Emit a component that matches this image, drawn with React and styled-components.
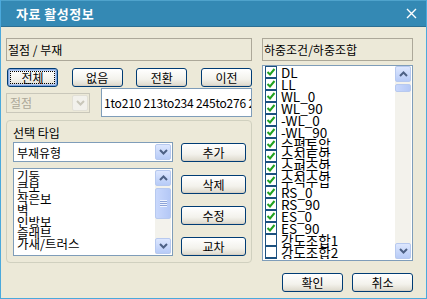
import React from 'react'
import styled, { createGlobalStyle } from 'styled-components'

const GlobalStyle = createGlobalStyle`
    html, body {
        margin: 0;
        padding: 0;
        background: #ece9d8;
    }
    body {
        font-family: "Noto Sans CJK KR", "Liberation Sans", sans-serif;
        font-size: 12px;
        color: #000;
    }
    * { box-sizing: border-box; }
`

const memberTypes = ['기둥', '큰보', '작은보', '벽', '인방보', '슬래브', '가새/트러스']

const loads = [
    ['DL', true], ['LL', true], ['WL_0', true], ['WL_90', true],
    ['-WL_0', true], ['-WL_90', true], ['수평토압', true], ['수직토압', true],
    ['수평수압', true], ['수직수압', true], ['RS_0', true], ['RS_90', true],
    ['ES_0', true], ['ES_90', true], ['강도조합1', false], ['강도조합2', false],
    ['강도조합3', false],
]

function Chevron({ up, color = '#4d6185' }) {
    return (
        <svg width="9" height="6" viewBox="0 0 9 6">
            <path d={up ? 'M1 5 L4.5 1.5 L8 5' : 'M1 1 L4.5 4.5 L8 1'} fill="none" stroke={color} strokeWidth="2" />
        </svg>
    )
}

function ScrollBar({ thumbTop, thumbHeight, grip }) {
    return (
        <Bar>
            <ArrowBtn><Chevron up /></ArrowBtn>
            <Track>
                <Thumb style={{ marginTop: thumbTop, height: thumbHeight }}>
                    {grip && <Grip />}
                </Thumb>
            </Track>
            <ArrowBtn><Chevron /></ArrowBtn>
        </Bar>
    )
}

function App() {
    return (
        <Window>
            <GlobalStyle />
            <TitleBar>
                <Title>자료 활성정보</Title>
                <svg width="11" height="11" viewBox="0 0 11 11">
                    <path d="M1 1 L10 10 M10 1 L1 10" stroke="#fff" strokeWidth="1.4" />
                </svg>
            </TitleBar>

            <Body>
                <Column>
                    <Header>절점 / 부재</Header>

                    <ButtonRow>
                        <Button $w={51} $default>
                            <Focus>전체</Focus>
                        </Button>
                        <Button $w={51}>없음</Button>
                        <Button $w={51}>전환</Button>
                        <Button $w={51}>이전</Button>
                    </ButtonRow>

                    <SelectRow>
                        <Combo $w={84} $disabled>
                            <ComboText $disabled>절점</ComboText>
                            <DropBtn $disabled><Chevron color="#c9c7ba" /></DropBtn>
                        </Combo>
                        <Input>1to210 213to234 245to276 281to300 310to340</Input>
                    </SelectRow>

                    <Group>
                        <GroupLabel>선택 타입</GroupLabel>
                        <GroupGrid>
                            <div>
                                <Combo $w={160}>
                                    <ComboText>부재유형</ComboText>
                                    <DropBtn><Chevron /></DropBtn>
                                </Combo>
                                <ListBox>
                                    <Items>
                                        {memberTypes.map(t => <Item key={t}>{t}</Item>)}
                                    </Items>
                                    <ScrollBar thumbTop={2} thumbHeight={31} grip />
                                </ListBox>
                            </div>
                            <SideButtons>
                                <Button $w={65} $mt={1}>추가</Button>
                                <Button $w={65} $mt={13}>삭제</Button>
                                <Button $w={65} $mt={12}>수정</Button>
                                <Button $w={65} $mt={12}>교차</Button>
                            </SideButtons>
                        </GroupGrid>
                    </Group>
                </Column>

                <Column>
                    <Header>하중조건/하중조합</Header>
                    <CheckList>
                        <Items $pl={2}>
                            {loads.map(([name, on]) => (
                                <CheckRow key={name}>
                                    <Box>
                                        {on && (
                                            <svg width="10" height="10" viewBox="0 0 10 10">
                                                <path d="M1.5 5 L4 7.5 L8.5 2" fill="none" stroke="#21a121" strokeWidth="2" />
                                            </svg>
                                        )}
                                    </Box>
                                    <CheckText>{name}</CheckText>
                                </CheckRow>
                            ))}
                        </Items>
                        <ScrollBar thumbTop={2} thumbHeight={8} />
                    </CheckList>
                    <Footer>
                        <Button $w={61}>확인</Button>
                        <Button $w={61}>취소</Button>
                    </Footer>
                </Column>
            </Body>
        </Window>
    )
}
export default App;

const Window = styled.div`
    width: 427px;
    height: 299px;
    background: #ece9d8;
    border: 1px solid #4ba9dc;
    border-top: none;
    display: flex;
    flex-direction: column;
    overflow: hidden;
`
const TitleBar = styled.div`
    height: 27px;
    flex-shrink: 0;
    margin: 0 -1px;
    background: #3489b4;
    border-top: 1px solid #4fa3cc;
    border-bottom: 1px solid #2c6f93;
    display: flex;
    align-items: center;
    justify-content: space-between;
    padding: 0 10px 0 16px;
`
const Title = styled.span`
    color: #fff;
    font-weight: bold;
    font-size: 13px;
    letter-spacing: 0.5px;
`
const Body = styled.div`
    display: grid;
    grid-template-columns: 246px 151px;
    column-gap: 10px;
    padding: 11px 12px 0 5px;
`
const Column = styled.div`
    display: flex;
    flex-direction: column;
`
const Header = styled.div`
    height: 23px;
    flex-shrink: 0;
    border: 1px solid #aca899;
    line-height: 21px;
    padding-left: 1px;
    font-size: 12px;
    white-space: nowrap;
`
const ButtonRow = styled.div`
    display: flex;
    justify-content: space-between;
    margin-top: 7px;
    padding-left: 1px;
`
const Button = styled.div`
    width: ${p => p.$w}px;
    height: 19px;
    flex-shrink: 0;
    margin-top: ${p => p.$mt || 0}px;
    border: 1px solid #003c74;
    border-radius: 3px;
    background: linear-gradient(#ffffff, #f3f2ec 60%, #dcd8cb);
    box-shadow: ${p => p.$default ? 'inset 0 0 0 1px #7fa3dc, inset 0 0 0 2px #b8cdf2' : 'inset 0 -1px 0 #d6d0c5'};
    display: flex;
    align-items: center;
    justify-content: center;
    font-size: 12px;
    line-height: 1;
    padding: 2px;
`
const Focus = styled.span`
    flex: 1;
    align-self: stretch;
    border: 1px dotted #000;
    display: flex;
    align-items: center;
    justify-content: center;
`
const SelectRow = styled.div`
    display: flex;
    align-items: center;
    justify-content: space-between;
    margin-top: 1px;
    height: 29px;
`
const Combo = styled.div`
    width: ${p => p.$w}px;
    height: 20px;
    border: 1px solid ${p => p.$disabled ? '#c9c7ba' : '#7f9db9'};
    background: ${p => p.$disabled ? '#ece9d8' : '#fff'};
    display: flex;
    align-items: center;
    padding: 1px;
`
const ComboText = styled.span`
    flex: 1;
    padding-left: 2px;
    font-size: 12px;
    color: ${p => p.$disabled ? '#aca899' : '#000'};
`
const DropBtn = styled.div`
    width: 16px;
    height: 16px;
    border: 1px solid ${p => p.$disabled ? '#e2e0d6' : '#b7c9ef'};
    border-radius: 2px;
    background: ${p => p.$disabled ? '#f2f1ec' : 'linear-gradient(#dde7fe, #b7cbf7)'};
    display: flex;
    align-items: center;
    justify-content: center;
`
const Input = styled.div`
    width: 151px;
    height: 29px;
    border: 1px solid #7f9db9;
    background: #fff;
    padding-left: 2px;
    line-height: 27px;
    font-size: 12px;
    white-space: nowrap;
    overflow: hidden;
    letter-spacing: -0.2px;
`
const Group = styled.div`
    margin-top: 3px;
    height: 143px;
    border: 1px solid #d0d0bf;
    border-radius: 4px;
    padding: 5px 5px 0 6px;
`
const GroupLabel = styled.div`
    height: 16px;
    line-height: 14px;
    font-size: 12px;
`
const GroupGrid = styled.div`
    display: grid;
    grid-template-columns: 160px 65px;
    column-gap: 8px;
`
const SideButtons = styled.div`
    display: flex;
    flex-direction: column;
`
const ListBox = styled.div`
    margin-top: 6px;
    height: 88px;
    border: 1px solid #7f9db9;
    background: #fff;
    display: flex;
    overflow: hidden;
    padding: 1px 0;
`
const Items = styled.div`
    flex: 1;
    padding-left: ${p => p.$pl ?? 3}px;
    overflow: hidden;
`
const Item = styled.div`
    height: 11.4px;
    line-height: 11.4px;
    font-size: 12.5px;
    white-space: nowrap;
`
const Bar = styled.div`
    width: 16px;
    margin-right: 1px;
    display: flex;
    flex-direction: column;
    background: #f3f2ec;
`
const ArrowBtn = styled.div`
    height: 16px;
    border: 1px solid #b7c9ef;
    border-radius: 2px;
    background: linear-gradient(#dde7fe, #b7cbf7);
    display: flex;
    align-items: center;
    justify-content: center;
`
const Track = styled.div`
    flex: 1;
    display: flex;
    flex-direction: column;
`
const Thumb = styled.div`
    border: 1px solid #b7c9ef;
    border-radius: 2px;
    background: linear-gradient(90deg, #c9d8fc, #b4c8f6);
    display: flex;
    align-items: center;
    justify-content: center;
`
const Grip = styled.div`
    width: 7px;
    height: 7px;
    background: repeating-linear-gradient(#eef3fe 0 1px, #8ca3d8 1px 2px);
`
const CheckList = styled.div`
    margin-top: 4px;
    height: 196px;
    flex-shrink: 0;
    border: 1px solid #7f9db9;
    background: #fff;
    display: flex;
    overflow: hidden;
    padding: 0 0 1px;
`
const CheckRow = styled.div`
    height: 12px;
    display: flex;
    align-items: center;
`
const Box = styled.div`
    width: 12px;
    height: 12px;
    flex-shrink: 0;
    border: 1px solid #1c5180;
    background: #fff;
    display: flex;
    align-items: center;
    justify-content: center;
`
const CheckText = styled.span`
    margin-left: 4px;
    font-size: 13.5px;
    line-height: 12px;
    white-space: nowrap;
`
const Footer = styled.div`
    display: flex;
    justify-content: flex-end;
    gap: 9px;
    margin-top: 12px;
`
